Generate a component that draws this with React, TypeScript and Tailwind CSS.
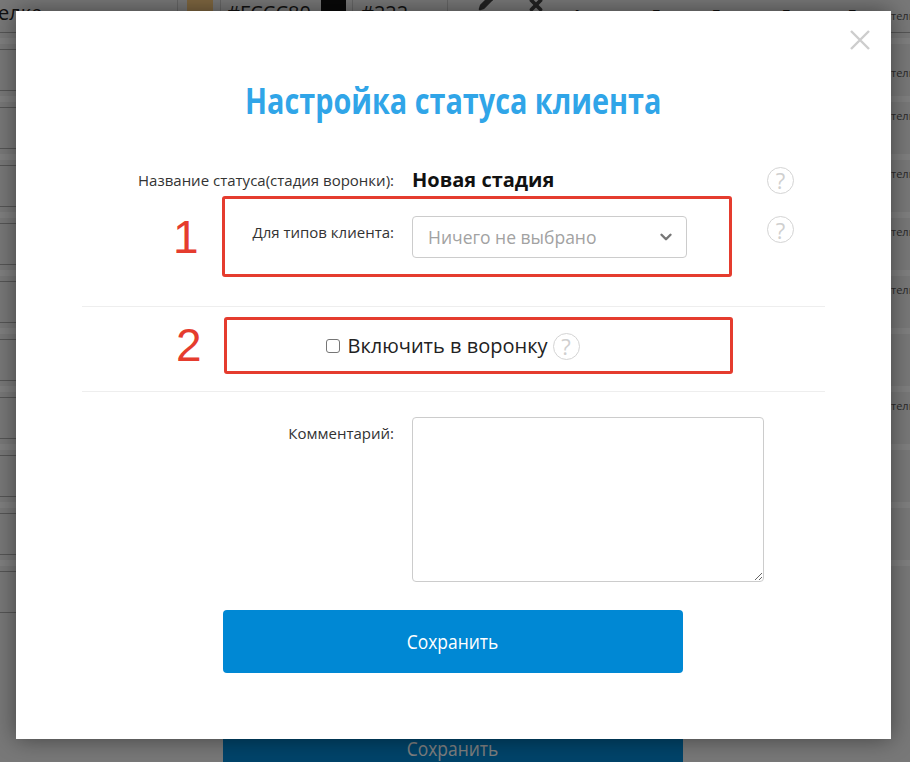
import { ChevronDown, Pencil, X } from 'lucide-react';

const font = "font-['Open_Sans',sans-serif]";
// отступ подписи "тель" справа в каждой строке, null — подписи нет
const rows: { bodyTop: number | null }[] = [
  { bodyTop: 15 },
  { bodyTop: 0 },
  { bodyTop: 0 },
  { bodyTop: 0 },
  { bodyTop: 0 },
  { bodyTop: null },
  { bodyTop: 0 },
  { bodyTop: null },
  { bodyTop: null },
  { bodyTop: null },
];

function Help({ className = '' }: { className?: string }) {
  return (
    <span className={`flex h-[27px] w-[27px] shrink-0 items-center justify-center rounded-full border border-[#d4d4d4] text-[22px] leading-none text-[#cfcfcf] ${className}`}>
      ?
    </span>
  );
}

function Backdrop() {
  return (
    <div className="h-[762px] overflow-hidden bg-[#f0f0f0] text-[#222]">
      <div className="relative flex h-[33px] items-start overflow-hidden border-b border-[#aaa] bg-[#f0f0f0] text-[20px] leading-[26px]">
        <span className="ml-[-13px] w-[190px] shrink-0">Телке</span>
        <span className="h-[32px] w-[10px] shrink-0 border-l border-[#ccc]" />
        <span className="h-[32px] w-[26px] shrink-0 bg-[#fccc80]" />
        <span className="ml-[7px] w-[94px] shrink-0 border-l border-[#ccc] pl-[6px]">#FCCC80</span>
        <span className="h-[32px] w-[7px] shrink-0" />
        <span className="h-[32px] w-[25px] shrink-0 bg-[#111]" />
        <span className="ml-[6px] w-[95px] shrink-0 border-l border-[#ccc] pl-[8px]">#222</span>
        <span className="h-[32px] w-[31px] shrink-0 border-l border-[#ccc]" />
        <Pencil className="mt-[-7px] h-[18px] w-[18px] shrink-0 fill-[#444] text-[#444]" />
        <X className="ml-[31px] mt-[-4px] h-[18px] w-[18px] shrink-0 text-[#444]" strokeWidth={5} />
        <span className="ml-[28px] mt-[8px] w-[80px] shrink-0 text-[12px] font-bold leading-[14px]">А</span>
        <span className="mt-[8px] w-[60px] shrink-0 text-[12px] leading-[14px]">Т</span>
        <span className="mt-[8px] w-[70px] shrink-0 text-[12px] leading-[14px]">Т</span>
        <span className="mt-[8px] w-[66px] shrink-0 text-[12px] leading-[14px]">Т</span>
        <span className="mt-[8px] w-[40px] shrink-0 text-[12px] leading-[14px]">Т</span>
        <span className="absolute right-0 top-[8px] w-[19px] overflow-hidden whitespace-nowrap text-[11px] leading-[16px] text-[#555]">тель</span>
      </div>
      {rows.map((row, i) => (
        <div key={i} className="relative flex h-[58px] flex-col">
          <div className="flex h-[16px] shrink-0 items-center">
            <div className="h-[6px] w-full bg-white" />
          </div>
          <div className="h-px w-[60px] shrink-0 bg-[#aaa]" />
          <div className="flex flex-1 justify-end overflow-visible text-[11px] leading-[16px] text-[#555]">
            {row.bodyTop !== null && (
              <span className="w-[19px] overflow-hidden whitespace-nowrap" style={{ marginTop: row.bodyTop }}>
                тель
              </span>
            )}
          </div>
          <div className="h-px w-[60px] shrink-0 bg-[#aaa]" />
        </div>
      ))}
    </div>
  );
}

function Marker({ n, numberClass, boxClass }: { n: string; numberClass: string; boxClass: string }) {
  return (
    <>
      <span className={`absolute font-['Liberation_Sans',sans-serif] text-[46px] leading-none text-[#e53c2e] ${numberClass}`}>{n}</span>
      <div className={`pointer-events-none absolute rounded-[3px] border-[3px] border-[#e53c2e] ${boxClass}`} />
    </>
  );
}

export default function App() {
  return (
    <div className={`relative h-[762px] w-[910px] overflow-hidden ${font}`}>
      <Backdrop />
      <div className="absolute bottom-0 left-[223px] flex h-[23px] w-[460px] items-center justify-center bg-[#0088d4] pb-[3px] text-[20px] text-white">
        <span className="inline-block scale-x-[0.87]">Сохранить</span>
      </div>
      <div className="absolute inset-0 bg-black/50" />

      <div className="absolute left-[16px] top-[11px] h-[728px] w-[875px] bg-white shadow-[0_0_22px_rgba(0,0,0,0.45)]">
        <button className="absolute right-[19px] top-[17px] text-[#cdcdcd]">
          <svg width="24" height="24" viewBox="0 0 24 24" fill="none" stroke="currentColor" strokeWidth="2.4">
            <path d="M3 3 L21 21 M21 3 L3 21" />
          </svg>
        </button>

        <h1 className="pt-[65px] text-center text-[36px] font-bold leading-[50px] text-[#30a5e8]">
          <span className="inline-block origin-center scale-x-[0.8] whitespace-nowrap">Настройка статуса клиента</span>
        </h1>

        <div className="mt-[44px] px-[66px]">
          <div className="flex h-[20px] items-center">
            <label className="w-[312px] text-right text-[15px] text-[#333]">Название статуса(стадия воронки):</label>
            <span className="ml-[18px] w-[355px] text-[20px] font-bold leading-none text-[#111]">Новая стадия</span>
            <Help />
          </div>

          <div className="mt-[26px] flex h-[90px] items-start">
            <label className="mt-[5px] w-[312px] text-right text-[15px] text-[#333]">Для типов клиента:</label>
            <div className="ml-[18px] flex h-[42px] w-[275px] items-center justify-between rounded-[4px] border border-[#ccc] pl-[15px] pr-[11px] text-[17.5px] text-[#a2a2a2]">
              Ничего не выбрано
              <ChevronDown className="h-[18px] w-[18px] text-[#777]" strokeWidth={3.2} />
            </div>
            <Help className="ml-[80px]" />
          </div>

          <div className="flex h-[86px] items-center justify-center border-y border-[#eee] pb-[6px] pr-[2px]">
            <span className="ml-[1px] h-[14px] w-[14px] rounded-[3px] border border-[#767676] bg-white" />
            <span className="ml-[7px] text-[20px] leading-none text-[#222]">Включить в воронку</span>
            <Help className="ml-[5px]" />
          </div>

          <div className="mt-[25px] flex items-start">
            <label className="mt-[5px] w-[312px] text-right text-[15px] text-[#333]">Комментарий:</label>
            <textarea className="ml-[18px] h-[165px] w-[352px] rounded-[4px] border border-[#ccc] outline-none" />
          </div>
        </div>

        <button className="ml-[207px] mt-[28px] block h-[63px] w-[460px] rounded-[4px] bg-[#0088d4] text-[20px] text-white">
          <span className="inline-block scale-x-[0.87]">Сохранить</span>
        </button>
      </div>

      <Marker n="1" numberClass="left-[173px] top-[214px]" boxClass="left-[222px] top-[196px] h-[81px] w-[510px]" />
      <Marker n="2" numberClass="left-[176px] top-[322px]" boxClass="left-[224px] top-[317px] h-[57px] w-[509px]" />
    </div>
  );
}
